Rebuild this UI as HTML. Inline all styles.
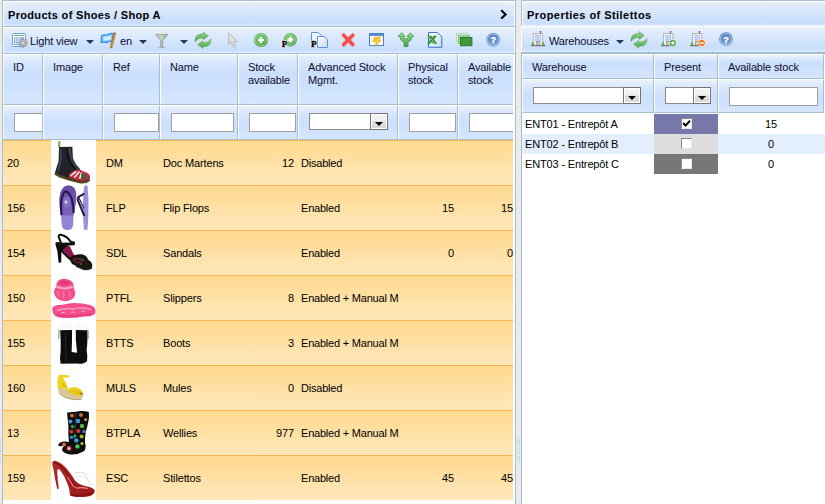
<!DOCTYPE html>
<html><head><meta charset="utf-8">
<style>
*{box-sizing:border-box;margin:0;padding:0}
html,body{width:825px;height:504px;overflow:hidden;background:#ebebeb;font-family:"Liberation Sans",sans-serif;font-size:11px;color:#000;letter-spacing:-0.15px}
.panel{position:absolute;top:0;height:520px;background:#fff;border:1px solid #a4bed4;overflow:hidden}
.in{position:absolute;left:0;top:0;right:0;bottom:0}
.title{position:absolute;left:1px;right:1px;top:1px;height:24px;background:linear-gradient(#f0f2ee,#e4eefd 2px,#d6e6fd 45%,#cadffd 78%,#ccdffd 90%,#dfebfd);font-weight:bold;font-size:11px;line-height:24px;white-space:nowrap}
.title b{position:absolute;left:4px;top:1px;letter-spacing:0.32px}
.hl{position:absolute;left:0;right:0;height:1px;background:#a4bed4}
.tbar{position:absolute;left:1px;right:1px;top:27px;height:25px;background:linear-gradient(#f0f2ee,#e5effd 2px,#d7e7fd 45%,#cadffd 80%,#cde0fd 91%,#dfebfd)}
.tbar svg{position:absolute;overflow:visible}
.tbar span{position:absolute;top:1px;line-height:25px;color:#0c0c30;white-space:nowrap}
.dd{position:absolute;width:0;height:0;border-left:4px solid transparent;border-right:4px solid transparent;border-top:4px solid #1c3b66;top:12px}
.grid{position:absolute;overflow:hidden}
.hc{position:absolute;border-left:1px solid #fff;border-top:1px solid #fff;border-right:1px solid #a4bed4;border-bottom:1px solid #a4bed4;background:linear-gradient(#f0f2ee,#e4eefd 2px,#d5e5fd 20%,#cbdffd 37%,#cde1fd 60%,#d6e6fd);overflow:hidden;line-height:13px;color:#0c0c30;white-space:nowrap}
.hc i{font-style:normal;position:absolute;left:9px;top:6px}
.fc{background:linear-gradient(#f0f2ee,#e4eefd 2px,#d6e6fd 25%,#ccdffd 48%,#cee1fd 70%,#d7e6fd)}
.fin{position:absolute;top:7px;height:19px;background:#fff;border:1px solid #9f9f9f}
.sel{position:absolute;top:7px;height:17px;background:#fff;border:1px solid #8c8c8c}
.sel u{position:absolute;right:-1px;top:-1px;bottom:-1px;width:18px;border:1px solid #757575;background:linear-gradient(#f4f4f4,#ededed 45%,#dcdcdc 55%,#dadada);box-shadow:inset 0 0 0 1px #fff}
.sel u:after{content:"";position:absolute;left:4px;top:8px;border-left:4px solid transparent;border-right:4px solid transparent;border-top:4px solid #000}
.row{position:absolute;left:0;width:515px;height:45px;background:linear-gradient(#ffda8f,#ffdd9a 28%,#ffe3ad 65%,#ffe7b9);border-top:1px solid #fbb552}
.row span{position:absolute;top:-1px;line-height:46px;white-space:nowrap;color:#000}
.img{position:absolute;left:48px;top:-1px;width:45px;height:45px;background:#fff;overflow:hidden}
.img svg{position:absolute;left:0;top:0}
.r{text-align:right}
.c{overflow:hidden;letter-spacing:-0.21px}
.rr{position:absolute;left:0;width:303px;height:20px}
.rr span{position:absolute;top:0;line-height:20px;white-space:nowrap}
.cb{position:absolute;left:27px;top:4px;width:11px;height:11px;background:#fff;border-left:1px solid #8a8a8a;border-top:1px solid #8a8a8a;border-right:1px solid #e8e8e8;border-bottom:1px solid #e8e8e8}
</style></head><body>
<!-- LEFT PANEL : outer x=2..516 -->
<div class="panel" style="left:2px;width:514px">
 <div class="title"><b>Products of Shoes / Shop A</b>
  <svg style="position:absolute;left:496px;top:7px" width="8" height="11" viewBox="0 0 8 11"><path d="M1.2 1.2 L5.6 5.4 L1.2 9.6" fill="none" stroke="#000" stroke-width="2.1"/></svg>
 </div>
 <div class="hl" style="top:25px"></div>
 <div class="tbar">
<svg style="left:0;top:0" width="510" height="25" viewBox="4 28 510 25">
<defs>
<linearGradient id="gg" x1="0" y1="0" x2="0" y2="1"><stop offset="0" stop-color="#9ddc97"/><stop offset="1" stop-color="#45a242"/></linearGradient>
<linearGradient id="gb" x1="0" y1="0" x2="0" y2="1"><stop offset="0" stop-color="#7fa6d8"/><stop offset="1" stop-color="#3f6fae"/></linearGradient>
<radialGradient id="rg" cx="0.45" cy="0.4" r="0.6"><stop offset="0" stop-color="#84cf7c"/><stop offset="0.6" stop-color="#63b85c"/><stop offset="1" stop-color="#3f983c"/></radialGradient>
<linearGradient id="hb" x1="0" y1="0" x2="0" y2="1"><stop offset="0" stop-color="#4f7db8"/><stop offset="1" stop-color="#7ba3d6"/></linearGradient>
<linearGradient id="gp" x1="0" y1="0" x2="1" y2="1"><stop offset="0" stop-color="#ffffff"/><stop offset="1" stop-color="#c5dbf7"/></linearGradient>
</defs>
<!-- light view : table + gear -->
<rect x="12.5" y="33.5" width="13" height="13" rx="1" fill="#fff" stroke="#6f9fe0"/>
<rect x="14" y="34.8" width="10" height="1.2" fill="#6fc26a"/>
<rect x="14" y="37.2" width="10" height="8" fill="#8db2ee"/>
<g fill="#fff"><rect x="15" y="38.2" width="1.3" height="1.3"/><rect x="17.4" y="38.2" width="3.4" height="1.3"/><rect x="15" y="40.4" width="1.3" height="1.3"/><rect x="17.4" y="40.4" width="3.4" height="1.3"/><rect x="15" y="42.6" width="1.3" height="1.3"/><rect x="17.4" y="42.6" width="3.4" height="1.3"/></g>
<g transform="translate(23 42.8)"><g fill="#a4a4a4" stroke="#8e8e8e" stroke-width="0.4"><rect x="-0.9" y="-4.7" width="1.8" height="9.4"/><rect x="-4.7" y="-0.9" width="9.4" height="1.8"/><rect x="-0.9" y="-4.7" width="1.8" height="9.4" transform="rotate(45)"/><rect x="-0.9" y="-4.7" width="1.8" height="9.4" transform="rotate(-45)"/></g><circle r="3.4" fill="#c4c4c4" stroke="#9a9a9a" stroke-width="0.7"/><circle r="1.5" fill="#eef4ff" stroke="#858585" stroke-width="0.7"/></g>
<path d="M101.5 36 Q104 34 107 35.2 Q110 33 113.2 33.6 L112.4 41.2 Q109 41 107 42.6 Q104 41.8 101.2 42.4 Z" fill="#8ecbf8" stroke="#1f8cf0" stroke-width="1.2"/>
<path d="M104 37 Q107 36 111 35.5 L110.6 39.6 Q107 40 104 40.6Z" fill="#d4ecfc"/>
<path d="M114.7 33.6 Q113.2 40 111.2 47" fill="none" stroke="#b4762a" stroke-width="2.6" stroke-linecap="round"/>
<path d="M114.9 33.8 Q113.4 40 111.5 46.8" fill="none" stroke="#e6b060" stroke-width="0.7"/>


<linearGradient id="fg" x1="0" y1="0" x2="1" y2="0"><stop offset="0" stop-color="#c6c6c6"/><stop offset="0.36" stop-color="#cacaca"/><stop offset="0.52" stop-color="#b2e0ae"/><stop offset="0.7" stop-color="#b4b4b4"/><stop offset="1" stop-color="#9a9a9a"/></linearGradient>
<path d="M155.4 34 H168 L162.7 40.4 V46.8 H160.7 V40.4 Z" fill="url(#fg)" stroke="#8a8a8a" stroke-width="0.8" stroke-linejoin="round"/>
<path d="M155.6 33.6 H167.8" stroke="#e2e2e2" stroke-width="1.3"/>
<path d="M155.6 34.6 H167.8" stroke="#9a9a9a" stroke-width="0.5"/>
<path d="M158 47.4 H165.4" stroke="#8f8f8f" stroke-width="0.9" opacity="0.6"/>
<g id="rf"><path d="M195 41.8 Q194.8 34.4 201.2 34.1 L203.2 34.1 L203.2 32 L208.4 35.9 L203.2 39.8 L203.2 37.9 L201.6 37.9 Q198 38.1 195 41.8 Z" fill="url(#gg)" stroke="#4a9f46" stroke-width="0.5"/>
<path d="M211.1 39 Q211.3 46.2 204.9 46.5 L202.9 46.5 L202.9 48.4 L197.7 44.6 L202.9 40.8 L202.9 42.7 L204.5 42.7 Q208.1 42.5 211.1 39 Z" fill="url(#gg)" stroke="#4a9f46" stroke-width="0.5"/></g>


<path d="M228.6 32.8 L228.6 44.6 L231.2 42.2 L233.6 47.4 L235.6 46.4 L233.4 41.6 L237.4 41.6 Z" fill="#dfdfdf" stroke="#b2b2b2" stroke-width="0.9" stroke-linejoin="round"/>


<circle cx="261" cy="40" r="7" fill="url(#rg)"/><circle cx="261" cy="40" r="5.7" fill="none" stroke="#dff3dc" stroke-width="0.6" opacity="0.8"/>
<path d="M261 37 V43 M258 40 H264" stroke="#fff" stroke-width="2.2"/>
<circle cx="290.2" cy="39.8" r="6.7" fill="url(#rg)"/><circle cx="290.2" cy="39.8" r="5.4" fill="none" stroke="#dff3dc" stroke-width="0.6" opacity="0.8"/>
<path d="M290.4 36.6 V42.6 M287.4 39.6 H293.4" stroke="#fff" stroke-width="2.2"/>
<text x="281.7" y="47" font-family="Liberation Serif" font-weight="bold" font-size="9.2" stroke="#fff" stroke-width="1.6" fill="#fff">P</text>
<text x="281.7" y="47" font-family="Liberation Serif" font-weight="bold" font-size="9.2" fill="#000" stroke="#000" stroke-width="0.35">P</text>


<path d="M312 32.5 H318.4 L321.5 35.6 V44.5 H311.5 V33 Q311.5 32.5 312 32.5 Z" fill="url(#gp)" stroke="#5f90d8" stroke-width="1"/>
<path d="M318 36.5 H324.4 L327.5 39.6 V47 Q327.5 47.5 327 47.5 H318 Q317.5 47.5 317.5 47 V37 Q317.5 36.5 318 36.5 Z" fill="url(#gp)" stroke="#5f90d8" stroke-width="1"/>
<text x="310.9" y="47" font-family="Liberation Serif" font-weight="bold" font-size="9.2" stroke="#fff" stroke-width="1.6" fill="#fff">P</text>
<text x="310.9" y="47" font-family="Liberation Serif" font-weight="bold" font-size="9.2" fill="#000" stroke="#000" stroke-width="0.35">P</text>


<path d="M343.6 35.2 L352.8 44.6 M352.8 35.2 L343.6 44.6" stroke="#f6a0a0" stroke-width="4.4" stroke-linecap="round"/>
<path d="M343.6 35.2 L352.8 44.6 M352.8 35.2 L343.6 44.6" stroke="#f04a4a" stroke-width="3" stroke-linecap="round"/>


<rect x="369.5" y="33.5" width="14" height="12" fill="#fff" stroke="#4f7fc4" stroke-width="1"/>
<rect x="370" y="34" width="13" height="2" fill="#5b8bd0"/>
<path d="M374.6 37 H381 L378.6 40 H381.4 L374.8 46.6 L376.4 42 H372.6 Z" fill="#f2c83a" stroke="#e0a820" stroke-width="0.5"/>


<path d="M398.2 36.4 L401.6 32.8 L405 36.4 L403.2 36.4 Q403.4 39 406 39 Q408.6 39 408.8 36.4 L407 36.4 L410.4 32.8 L413.8 36.4 L412 36.4 Q411.8 41 408 41.8 L408 46.6 L404 46.6 L404 41.8 Q400.2 41 400 36.4 Z" fill="url(#gg)" stroke="#3f9a3c" stroke-width="0.8" stroke-linejoin="round"/>


<path d="M428.5 32.5 H437.5 L441.8 36.8 V47.3 H428.5 Z" fill="url(#gp)" stroke="#3f74c8" stroke-width="1"/>
<path d="M427 35.8 H431 L437.4 43.8 H433.4 Z" fill="#2f8a2c"/>
<path d="M433.6 35.8 H437.2 L430.4 43.8 H426.8 Z" fill="#3a9a36"/>
<path d="M428.6 36.2 L435.4 43.6" stroke="#bfe8ba" stroke-width="0.8"/>
<path d="M429.6 35.9 L436.2 43.4" stroke="#1f6a1c" stroke-width="0.6"/>
<rect x="456.5" y="33.5" width="11" height="8" fill="#e2f2e0" stroke="#a8d4a4" stroke-width="0.8"/>
<rect x="458.5" y="35.5" width="11" height="8" fill="#a9d6a5" stroke="#6fb86a" stroke-width="0.8"/>
<rect x="460.5" y="37.5" width="11.4" height="8.2" fill="#3f9a3c" stroke="#2a7a28" stroke-width="1"/>


<circle cx="493.2" cy="39.8" r="6.9" fill="url(#hb)"/><circle cx="493.2" cy="39.8" r="5.7" fill="none" stroke="#e4eefa" stroke-width="0.7" opacity="0.85"/>
<text x="493.3" y="43.2" text-anchor="middle" font-family="Liberation Sans" font-weight="bold" font-size="9.2" fill="#fff" stroke="#fff" stroke-width="0.3">?</text>
</svg>
  <span style="left:26px">Light view</span><div class="dd" style="left:82px"></div>
  <span style="left:116px">en</span><div class="dd" style="left:135px"></div>
  <div class="dd" style="left:176px"></div>
 </div>
 <div class="hl" style="top:52px"></div>
 <!-- grid: panel-relative x = abs-3 ; grid abs x=3..513 -->
 <div class="grid" style="left:0;top:53px;width:510px;height:470px">
  <div class="hc" style="left:0;top:0;width:40px;height:51px"><i>ID</i></div>
  <div class="hc" style="left:40px;top:0;width:60px;height:51px"><i>Image</i></div>
  <div class="hc" style="left:100px;top:0;width:57px;height:51px"><i>Ref</i></div>
  <div class="hc" style="left:157px;top:0;width:78px;height:51px"><i>Name</i></div>
  <div class="hc" style="left:235px;top:0;width:60px;height:51px"><i>Stock<br>available</i></div>
  <div class="hc" style="left:295px;top:0;width:100px;height:51px"><i>Advanced Stock<br>Mgmt.</i></div>
  <div class="hc" style="left:395px;top:0;width:60px;height:51px"><i>Physical<br>stock</i></div>
  <div class="hc" style="left:455px;top:0;width:60px;height:51px"><i>Available<br>stock</i></div>

  <div class="hc fc" style="left:0;top:51px;width:40px;height:35px"><div class="fin" style="left:10px;width:40px"></div></div>
  <div class="hc fc" style="left:40px;top:51px;width:60px;height:35px"></div>
  <div class="hc fc" style="left:100px;top:51px;width:57px;height:35px"><div class="fin" style="left:10px;width:45px"></div></div>
  <div class="hc fc" style="left:157px;top:51px;width:78px;height:35px"><div class="fin" style="left:10px;width:63px"></div></div>
  <div class="hc fc" style="left:235px;top:51px;width:60px;height:35px"><div class="fin" style="left:10px;width:47px"></div></div>
  <div class="hc fc" style="left:295px;top:51px;width:100px;height:35px"><div class="sel" style="left:10px;width:79px"><u></u></div></div>
  <div class="hc fc" style="left:395px;top:51px;width:60px;height:35px"><div class="fin" style="left:10px;width:47px"></div></div>
  <div class="hc fc" style="left:455px;top:51px;width:60px;height:35px"><div class="fin" style="left:10px;width:60px"></div></div>
  <div style="position:absolute;left:0;top:86px;width:515px;height:360px">
  <div class="row" style="top:0px">
   <span style="left:4px">20</span>
   <div class="img"><svg width="45" height="45" viewBox="0 0 45 45"><defs><filter id="b1" x="-10%" y="-10%" width="120%" height="120%"><feGaussianBlur stdDeviation="0.5"/></filter></defs><g filter="url(#b1)">
<path d="M7.8 7 Q7.2 2 8.2 1.2 Q9.2 1 9 3 L8.8 7" fill="none" stroke="#7a7a30" stroke-width="0.9"/>
<path d="M8 7.1 L21.4 6.7 Q21.6 13 21.9 17.9 Q23.6 22.6 25.9 25.9 Q28 28.6 30.4 30.8 Q33.6 32.2 35.7 33.5 Q38 34.6 38.8 36.6 L38.4 39.6 Q34 42.4 29.5 41.6 L17.9 38.8 L4 33.8 Q3.8 32 4.5 31 Q5.6 27 6.8 24 Q7.8 21 7.6 20.5 Z" fill="#20242b"/>
<path d="M9.6 9 Q10.4 18 9 25 Q7.4 29 7 32" fill="none" stroke="#444a56" stroke-width="1.5"/>
<path d="M18.4 8 Q19 14 20.4 19 Q23 24.6 28 29.6" fill="none" stroke="#3c414b" stroke-width="2.6"/>
<path d="M16 8 Q16.6 15 18 20 Q20 25 24 29" fill="none" stroke="#0c0d10" stroke-width="1.4"/>
<path d="M17.9 34 Q21 30.4 27.4 29.4 Q33 30.6 35.7 33.5 Q38 34.6 38.8 36.6 L38.4 39.2 Q33 41.4 27.6 40.4 L18 37.4 Z" fill="#c22a40"/>
<path d="M19.6 36 L25 31.4 M23.4 37.4 L28.4 31.6 M28.6 38.8 L30.6 32.6" stroke="#f6f2f2" stroke-width="1.6"/>
<path d="M30 33.4 Q34 33.6 35.8 37.4 L32.6 39.8 Q30 38 30 33.4Z" fill="#2a6a3c"/>
<path d="M34.4 32.6 Q37.6 33.8 38.4 36.6" fill="none" stroke="#c22a40" stroke-width="1.4"/>
<path d="M3.9 33.4 L9 36.4 L17.9 39.4 L29.5 42.2 Q34.4 43 38.6 39.8" fill="none" stroke="#54421f" stroke-width="2.4"/>
</g></svg></div>
   <span style="left:103px">DM</span>
   <span style="left:160px">Doc Martens</span>
   <span class="r" style="left:235px;width:56px">12</span>
   <span class="c" style="left:298px;width:100px">Disabled</span>
   <span class="r" style="left:395px;width:56px"></span>
   <span class="r" style="left:455px;width:55px"></span>
  </div>
  <div class="row" style="top:45px">
   <span style="left:4px">156</span>
   <div class="img"><svg width="45" height="45" viewBox="0 0 45 45"><defs><filter id="b2" x="-10%" y="-10%" width="120%" height="120%"><feGaussianBlur stdDeviation="0.55"/></filter><linearGradient id="ff" x1="0" y1="0" x2="0" y2="1"><stop offset="0" stop-color="#6a4aa8"/><stop offset="1" stop-color="#7a62bc"/></linearGradient></defs><g filter="url(#b2)">
<path d="M17 0.6 Q24.4 0.6 25.2 9 Q25.6 18 23 27 Q22 34 22.2 40 Q21.6 45 16.4 45 Q11 45 10.6 39 Q10.4 32 9.4 26 Q7.4 15 9.4 8 Q11.6 1 17 0.6Z" fill="#8f84d6"/>
<path d="M17 0.6 Q24.4 0.6 25.2 9 Q25.6 18 23 27 L22.2 30.6 L10.2 30.6 L9.4 26 Q7.4 15 9.4 8 Q11.6 1 17 0.6Z" fill="url(#ff)"/>
<path d="M10.6 30 Q8.6 16 12.6 8 Q14.4 5.4 17 7.6 Q22 11 22.6 28" fill="none" stroke="#2a1858" stroke-width="2.2"/>
<ellipse cx="16" cy="17.6" rx="3.8" ry="6" fill="#8672c4" opacity="0.85"/>
<ellipse cx="15" cy="17" rx="1.5" ry="1.8" fill="#d0c8ec"/>
<path d="M33.2 1.4 Q35 -0.8 36.6 1.4 Q38 14 37.4 28 Q37.2 38 36.4 44.8 L33 44.8 Q32 34 32.2 26 Q31.6 12 33.2 1.4Z" fill="#9b8edc"/>
<path d="M33.4 8.6 L28 11.6 Q26 13 27 15.6 L33.4 31" fill="none" stroke="#24163f" stroke-width="2"/>
<path d="M28 13 L33 23.6" fill="none" stroke="#3a2a5c" stroke-width="1.3"/>
</g></svg></div>
   <span style="left:103px">FLP</span>
   <span style="left:160px">Flip Flops</span>
   <span class="r" style="left:235px;width:56px"></span>
   <span class="c" style="left:298px;width:100px">Enabled</span>
   <span class="r" style="left:395px;width:56px">15</span>
   <span class="r" style="left:455px;width:55px">15</span>
  </div>
  <div class="row" style="top:90px">
   <span style="left:4px">154</span>
   <div class="img"><svg width="45" height="45" viewBox="0 0 45 45"><defs><filter id="b3" x="-10%" y="-10%" width="120%" height="120%"><feGaussianBlur stdDeviation="0.5"/></filter></defs><g filter="url(#b3)">
<path d="M12.6 15.6 Q16 14.6 19 16.6 Q21 22 24.4 27 L21 30.4 Q15 24 11 19.6 Z" fill="#8e1244"/>
<path d="M8 8.4 Q6.8 4.4 10 4.8 Q16 6.2 19.6 11.6 L23.8 12.6" fill="none" stroke="#111" stroke-width="2"/>
<path d="M8.2 8 Q9.4 12 11 15" fill="none" stroke="#111" stroke-width="1.9"/>
<path d="M4.4 12.4 Q7 11.4 10 12.8 L23.6 12.4 Q25 14 23 15.2 L17 15.6 Q14 18 12 19.6 L10.4 21.4 L10.2 32.6 L7.6 32.8 L6.4 21 Q4.4 16 4.4 12.4Z" fill="#0e0e0e"/>
<path d="M10 20 Q16 27 22 31" fill="none" stroke="#101010" stroke-width="2.2"/>
<path d="M18 28.6 Q23 23.6 31 24.2 Q36 25.6 37 29.6 Q40.6 31.6 41.4 35 L40.8 38 Q36 40.4 31.4 38.8 L21 34 Z" fill="#14120f"/>
<path d="M21.6 30.4 Q24.6 27.8 28 28.8 M26.4 33.4 Q29.4 30.4 33 30.8" stroke="#8a1a4a" stroke-width="1.3" fill="none"/>
<path d="M28 29 Q31 28.4 33 30.4" stroke="#2a6a3a" stroke-width="1.3" fill="none"/>
<circle cx="30" cy="34" r="0.7" fill="#c8a040"/><circle cx="35" cy="33" r="0.6" fill="#b03060"/><circle cx="25" cy="31.6" r="0.6" fill="#c8a040"/>
<path d="M25 36 L32 39 Q37 40.4 41 37.8" fill="none" stroke="#262626" stroke-width="1.4"/>
</g></svg></div>
   <span style="left:103px">SDL</span>
   <span style="left:160px">Sandals</span>
   <span class="r" style="left:235px;width:56px"></span>
   <span class="c" style="left:298px;width:100px">Enabled</span>
   <span class="r" style="left:395px;width:56px">0</span>
   <span class="r" style="left:455px;width:55px">0</span>
  </div>
  <div class="row" style="top:135px">
   <span style="left:4px">150</span>
   <div class="img"><svg width="45" height="45" viewBox="0 0 45 45"><defs><filter id="b4" x="-10%" y="-10%" width="120%" height="120%"><feGaussianBlur stdDeviation="0.65"/></filter></defs><g filter="url(#b4)">
<path d="M8 5 Q14 2.4 19.4 5.4 Q23.6 8 22.6 13 Q25.6 18 23 22.6 Q18 27.4 11 25.8 Q3.6 23.8 3 17.6 Q3.6 13 5.4 11 Q5 7 8 5Z" fill="#f24f8c"/>
<ellipse cx="13.4" cy="7.8" rx="5.2" ry="2.3" fill="#e43a78"/>
<path d="M5.4 11.6 Q13 15.4 22 11.6" fill="none" stroke="#f9a6c4" stroke-width="2.2"/>
<path d="M6 16 Q8 18 7 21 M12 17 Q14 20 12 23 M18 16 Q20 19 19 22" fill="none" stroke="#f780ac" stroke-width="1.2"/>
<path d="M1.2 33 Q4 29.2 12 29.8 Q20 27.2 27 28.2 Q36 28.4 42.4 31.4 Q45.4 34 44.2 38.4 Q41 42 33 41.4 Q20 44 8 42.4 Q1 41 1.2 33Z" fill="#f24f8c"/>
<path d="M6 35.6 Q14 32.6 22 34 Q31 31.6 40 34.6" fill="none" stroke="#f88eb6" stroke-width="1.8"/>
<path d="M10 38 Q12 36 14 38.6 M20 37.6 Q22 35.6 24 38 M30 36.6 Q32 34.6 34 37" fill="none" stroke="#fab0cc" stroke-width="1"/>
<path d="M4 39.8 Q20 42.4 40 39" fill="none" stroke="#e43a78" stroke-width="1.4"/>
</g></svg></div>
   <span style="left:103px">PTFL</span>
   <span style="left:160px">Slippers</span>
   <span class="r" style="left:235px;width:56px">8</span>
   <span class="c" style="left:298px;width:100px">Enabled + Manual M</span>
   <span class="r" style="left:395px;width:56px"></span>
   <span class="r" style="left:455px;width:55px"></span>
  </div>
  <div class="row" style="top:180px">
   <span style="left:4px">155</span>
   <div class="img"><svg width="45" height="45" viewBox="0 0 45 45"><defs><filter id="b5" x="-10%" y="-10%" width="120%" height="120%"><feGaussianBlur stdDeviation="0.45"/></filter></defs><g filter="url(#b5)">
<path d="M8.6 2.8 Q15 1.4 21.6 2.8 L21.4 10.4 L9 10.6Z M24.4 2.8 Q30 1.4 36.4 2.8 L36 10.6 L24.8 10.4Z" fill="#fbfbfb"/>
<path d="M8 9.6 L7.8 19" stroke="#777" stroke-width="0.9"/><path d="M37 9.6 L37.2 19" stroke="#777" stroke-width="0.9"/>
<path d="M24.8 10 L36.2 10.2 Q36.8 22 35.6 30 Q36.8 36 36 41.6 Q32 43 27 42 L25.8 30 Q24.4 20 24.8 10Z" fill="#0f0f10"/>
<path d="M9.2 10.2 L21 10 Q21.2 22 20.6 32 Q26 32.4 31 34.6 Q35.4 36.8 35.4 41.4 Q33 44.2 26 43.6 L9.6 43.8 Q8.4 38 9.6 32 Q10 20 9.2 10.2Z" fill="#0b0b0c"/>
<path d="M14.4 12 L15 42" stroke="#4a4030" stroke-width="0.5"/>
</g></svg></div>
   <span style="left:103px">BTTS</span>
   <span style="left:160px">Boots</span>
   <span class="r" style="left:235px;width:56px">3</span>
   <span class="c" style="left:298px;width:100px">Enabled + Manual M</span>
   <span class="r" style="left:395px;width:56px"></span>
   <span class="r" style="left:455px;width:55px"></span>
  </div>
  <div class="row" style="top:225px">
   <span style="left:4px">160</span>
   <div class="img"><svg width="45" height="45" viewBox="0 0 45 45"><defs><filter id="b6" x="-10%" y="-10%" width="120%" height="120%"><feGaussianBlur stdDeviation="0.5"/></filter></defs><g filter="url(#b6)">
<path d="M6.6 22.6 Q11 22 16.6 24.6 Q24 26 31.6 29.6 Q32.6 32 30.4 34.6 Q22 35.6 14 32.4 L8.4 29 Z" fill="#d9c69a"/>
<path d="M8.6 29 L14 32.4 Q22 35.6 30.4 34.6" fill="none" stroke="#b8a47a" stroke-width="1"/>
<path d="M7.6 10.4 Q8.4 9.4 10.4 9.8 L18.6 10.6 L18.4 12.6 L11.6 12.4 Q14 15 15.8 19.6 L16.4 24.4 L12.6 23.6 L6.6 23 Q5.6 17 7.6 10.4Z" fill="#f0d41c"/>
<path d="M11 18 Q13 21 16 22.4" stroke="#d4a228" stroke-width="1.2" fill="none"/>
<path d="M15.6 24.6 Q19 21.6 24.6 22.2 Q28.6 22.6 30.6 25.6 Q32.6 27 32 30 L28.4 31.4 L20 28.6 Z" fill="#efd21a"/>
<path d="M18 27.2 Q23 24.6 28.4 26.4 M22.4 29 Q26 27 30.6 28.6" stroke="#d8b21a" stroke-width="1" fill="none"/>
<path d="M28.6 28.4 Q30.4 28 31.4 29.6" stroke="#a05a2a" stroke-width="1.4" fill="none"/>
</g></svg></div>
   <span style="left:103px">MULS</span>
   <span style="left:160px">Mules</span>
   <span class="r" style="left:235px;width:56px">0</span>
   <span class="c" style="left:298px;width:100px">Disabled</span>
   <span class="r" style="left:395px;width:56px"></span>
   <span class="r" style="left:455px;width:55px"></span>
  </div>
  <div class="row" style="top:270px">
   <span style="left:4px">13</span>
   <div class="img"><svg width="45" height="45" viewBox="0 0 45 45"><defs><filter id="b7" x="-10%" y="-10%" width="120%" height="120%"><feGaussianBlur stdDeviation="0.45"/></filter></defs><g filter="url(#b7)">
<path d="M16 2.4 L25 1.8 L25.6 20 Q25 28 24 33 L18 33.4 Q17 24 17.4 16 Z" fill="#0e0f0e"/>
<path d="M24 2 Q31 0.2 37.8 2 L38 8 Q36.6 16 34.8 22 Q33.6 28 34 33 Q35.6 37 33.4 41 Q27 44.8 20 44.4 Q12.6 44 11 40 Q11.4 36 15 35 Q9 37.4 7.2 35.6 Q7.2 32.6 12 31.6 Q17 31 20.6 33 Q22.6 26 23 18 Z" fill="#0d0e0d"/>
<path d="M24.9 2 Q25 16 23.2 30" fill="none" stroke="#4a4c4a" stroke-width="0.7"/>
<g><circle cx="21" cy="5.6" r="1.9" fill="#d86a2a"/><circle cx="19.4" cy="11.4" r="2" fill="#3aa0d8"/><circle cx="21.6" cy="16.6" r="1.8" fill="#3a9a3a"/><circle cx="20.4" cy="21.6" r="1.9" fill="#d83a2a"/><circle cx="20.6" cy="27.2" r="1.8" fill="#3a8ad8"/>
<circle cx="30" cy="5" r="2" fill="#c86a3a"/><circle cx="27" cy="11" r="2.2" fill="#3a9ad8"/><circle cx="31" cy="16" r="2.2" fill="#4aba3a"/><circle cx="27.4" cy="21" r="2.1" fill="#d83a3a"/><circle cx="33" cy="21.4" r="1.7" fill="#3a7ad8"/><circle cx="30.6" cy="26.6" r="2" fill="#9aba2a"/><circle cx="25.4" cy="30.4" r="2.2" fill="#3a9ae0"/><circle cx="34.6" cy="9.6" r="1.6" fill="#c88a3a"/><circle cx="24" cy="26" r="1.4" fill="#4aba3a"/>
<circle cx="26.4" cy="36.4" r="2.2" fill="#4aca5a"/><circle cx="18" cy="38.4" r="2.4" fill="#e84a5a"/><circle cx="18" cy="38.4" r="1" fill="#fff"/><circle cx="13" cy="34.4" r="1.9" fill="#d86a5a"/><circle cx="31" cy="33.6" r="1.5" fill="#d8c03a"/></g>
</g></svg></div>
   <span style="left:103px">BTPLA</span>
   <span style="left:160px">Wellies</span>
   <span class="r" style="left:235px;width:56px">977</span>
   <span class="c" style="left:298px;width:100px">Enabled + Manual M</span>
   <span class="r" style="left:395px;width:56px"></span>
   <span class="r" style="left:455px;width:55px"></span>
  </div>
  <div class="row" style="top:315px">
   <span style="left:4px">159</span>
   <div class="img"><svg width="45" height="45" viewBox="0 0 45 45"><defs><filter id="b8" x="-10%" y="-10%" width="120%" height="120%"><feGaussianBlur stdDeviation="0.5"/></filter><linearGradient id="rd" x1="0" y1="0" x2="1" y2="1"><stop offset="0" stop-color="#b42828"/><stop offset="1" stop-color="#98181a"/></linearGradient></defs><g filter="url(#b8)">
<path d="M22 18 Q30 16.6 33.6 18.6 Q37 24 39.6 30.4" fill="none" stroke="#dfe4e2" stroke-width="1.1"/>
<path d="M24 22 Q30 20 35 23" fill="none" stroke="#eef0ee" stroke-width="2.4" opacity="0.7"/>
<path d="M1.2 7.6 Q2 5.4 5 6 Q11 8 16 14 Q21 20 24 25.6 Q28 30 36 31.6 Q42 32.6 43.8 35.4 Q43.2 39.8 38 41.2 Q30 42.8 22 41.6 L19 40.2 Q18.6 33 16.2 28 Q13 20 8.6 14.6 Q6.6 13 6.2 16 Q6.6 26 7.8 33.6 L6.2 34 Q4 24 2.4 14 Q1 10 1.2 7.6Z" fill="url(#rd)"/>
<path d="M3.6 7.6 Q11 10.4 16 18 Q20 26 24 30.4" fill="none" stroke="#7a1214" stroke-width="1.5"/>
<path d="M16.6 22 Q20 27 22.4 31.4 Q24.6 33.2 28 33.4" fill="none" stroke="#e47878" stroke-width="1.2"/>
<path d="M27 32.8 Q32 32.2 36.6 33.6" fill="none" stroke="#ea8a8a" stroke-width="1.1"/>
<path d="M19.4 39.8 Q30 41.8 42.4 37.6" fill="none" stroke="#7a1214" stroke-width="1.4"/>
</g></svg></div>
   <span style="left:103px">ESC</span>
   <span style="left:160px">Stilettos</span>
   <span class="r" style="left:235px;width:56px"></span>
   <span class="c" style="left:298px;width:100px">Enabled</span>
   <span class="r" style="left:395px;width:56px">45</span>
   <span class="r" style="left:455px;width:55px">45</span>
  </div>
  </div>
 </div>
</div>
<!-- splitter grip -->
<div style="position:absolute;left:517px;top:438px;width:3px;height:25px;background:repeating-linear-gradient(#b9cbe2 0 1px,transparent 1px 2px)"></div>
<div style="position:absolute;left:518px;top:438px;width:1px;height:25px;background:#ebebeb"></div>
<div style="position:absolute;left:0;top:438px;width:1px;height:25px;background:repeating-linear-gradient(#b9cbe2 0 1px,transparent 1px 2px)"></div>
<!-- RIGHT PANEL : outer x=521.. -->
<div class="panel" style="left:521px;width:310px">
 <div class="title"><b style="letter-spacing:0.45px">Properties of Stilettos</b></div>
 <div class="hl" style="top:25px;background:#fff"></div>
 <div class="tbar" style="left:0;top:26px;height:25px;background:linear-gradient(#f0f2ee,#e5effd 2px,#d7e7fd 45%,#cadffd 80%,#cde0fd 91%,#dfebfd)">
<div style="position:absolute;left:1px;top:1px;width:300px;height:25px">
<svg style="left:0;top:0" width="300" height="25" viewBox="523 28 300 25">
<defs>
<linearGradient id="hg" x1="0" y1="0" x2="0" y2="1"><stop offset="0" stop-color="#9ddc97"/><stop offset="1" stop-color="#45a242"/></linearGradient>
<linearGradient id="hb2" x1="0" y1="0" x2="0" y2="1"><stop offset="0" stop-color="#4f7db8"/><stop offset="1" stop-color="#7ba3d6"/></linearGradient>
<g id="bld"><rect x="2.5" y="2.8" width="9.4" height="12" fill="#f3f3f3" stroke="#a8a8a8" stroke-width="0.8"/>
<rect x="4.2" y="4.6" width="6" height="1.1" fill="#8fb4ee"/><rect x="4.2" y="6.7" width="6" height="1.1" fill="#8fb4ee"/><rect x="4.2" y="8.8" width="6" height="1.1" fill="#8fb4ee"/>
<rect x="5.4" y="10.8" width="3.6" height="4" fill="#c8c8c8" stroke="#8a8a8a" stroke-width="0.7"/>
<path d="M0.4 14.8 L2 10.6 L3.8 14.8 Z M10.6 14.8 L12.4 10.6 L14.2 14.8Z" fill="#4fb04a"/>
<rect x="0" y="14.6" width="14.6" height="1" fill="#6a6a6a"/>
<rect x="9.2" y="1.4" width="0.8" height="1.8" fill="#555"/><circle cx="9.6" cy="1.2" r="0.8" fill="#e82020"/></g>
</defs>
<use href="#bld" x="530.8" y="30.6"/>


<g transform="translate(435.9 -0.4)"><path d="M195 41.8 Q194.8 34.4 201.2 34.1 L203.2 34.1 L203.2 32 L208.4 35.9 L203.2 39.8 L203.2 37.9 L201.6 37.9 Q198 38.1 195 41.8 Z" fill="url(#hg)" stroke="#4a9f46" stroke-width="0.5"/>
<path d="M211.1 39 Q211.3 46.2 204.9 46.5 L202.9 46.5 L202.9 48.4 L197.7 44.6 L202.9 40.8 L202.9 42.7 L204.5 42.7 Q208.1 42.5 211.1 39 Z" fill="url(#hg)" stroke="#4a9f46" stroke-width="0.5"/></g>


<use href="#bld" x="661" y="30.6"/>
<circle cx="672.8" cy="43" r="3.6" fill="#3fa03a" stroke="#fff" stroke-width="0.7"/><path d="M672.8 41 V45 M670.8 43 H674.8" stroke="#fff" stroke-width="1.3"/>


<use href="#bld" x="690" y="30.6"/>
<circle cx="701.8" cy="43" r="3.6" fill="#f07818" stroke="#fff" stroke-width="0.7"/><path d="M699.8 43 H703.8" stroke="#fff" stroke-width="1.4"/>


<circle cx="726" cy="39.2" r="6.9" fill="url(#hb2)"/><circle cx="726" cy="39.2" r="5.7" fill="none" stroke="#e4eefa" stroke-width="0.7" opacity="0.85"/>
<text x="726.1" y="42.6" text-anchor="middle" font-family="Liberation Sans" font-weight="bold" font-size="9.2" fill="#fff" stroke="#fff" stroke-width="0.3">?</text>
</svg>
  <span style="left:26px">Warehouses</span><div class="dd" style="left:93px"></div>
</div>
 </div>
 <div class="hl" style="top:51px;height:2px"></div>
 <div class="grid" style="left:0;top:53px;width:303px;height:470px">
  <div class="hc" style="left:0;top:0;width:132px;height:25px"><i>Warehouse</i></div>
  <div class="hc" style="left:132px;top:0;width:64px;height:25px"><i>Present</i></div>
  <div class="hc" style="left:196px;top:0;width:106px;height:25px"><i>Available stock</i></div>
  <div class="hc fc" style="left:0;top:25px;width:132px;height:34px"><div class="sel" style="left:10px;width:108px"><u></u></div></div>
  <div class="hc fc" style="left:132px;top:25px;width:64px;height:34px"><div class="sel" style="left:10px;width:46px"><u></u></div></div>
  <div class="hc fc" style="left:196px;top:25px;width:106px;height:34px"><div class="fin" style="left:10px;width:89px"></div></div>
  <div class="rr" style="top:60px"><span style="left:3px">ENT01 - Entrepôt A</span><div style="position:absolute;left:132px;top:0;width:64px;height:20px;background:#7777aa"><div class="cb"><svg width="9" height="9" viewBox="0 0 9 9" style="position:absolute;left:0;top:0"><path d="M1.2 4 L3.6 6.6 L8 1.8" fill="none" stroke="#000" stroke-width="2"/></svg></div></div><span style="left:196px;width:106px;text-align:center">15</span></div>
  <div class="rr" style="top:80px;background:#e3efff"><span style="left:3px">ENT02 - Entrepôt B</span><div style="position:absolute;left:132px;top:0;width:64px;height:20px;background:#dddddd"><div class="cb"></div></div><span style="left:196px;width:106px;text-align:center">0</span></div>
  <div class="rr" style="top:100px"><span style="left:3px">ENT03 - Entrepôt C</span><div style="position:absolute;left:132px;top:0;width:64px;height:20px;background:#777777"><div class="cb"></div></div><span style="left:196px;width:106px;text-align:center">0</span></div>
 </div>
</div>
<div style="position:absolute;left:521px;top:26px;width:1px;height:26px;background:#fff"></div>
</body></html>
